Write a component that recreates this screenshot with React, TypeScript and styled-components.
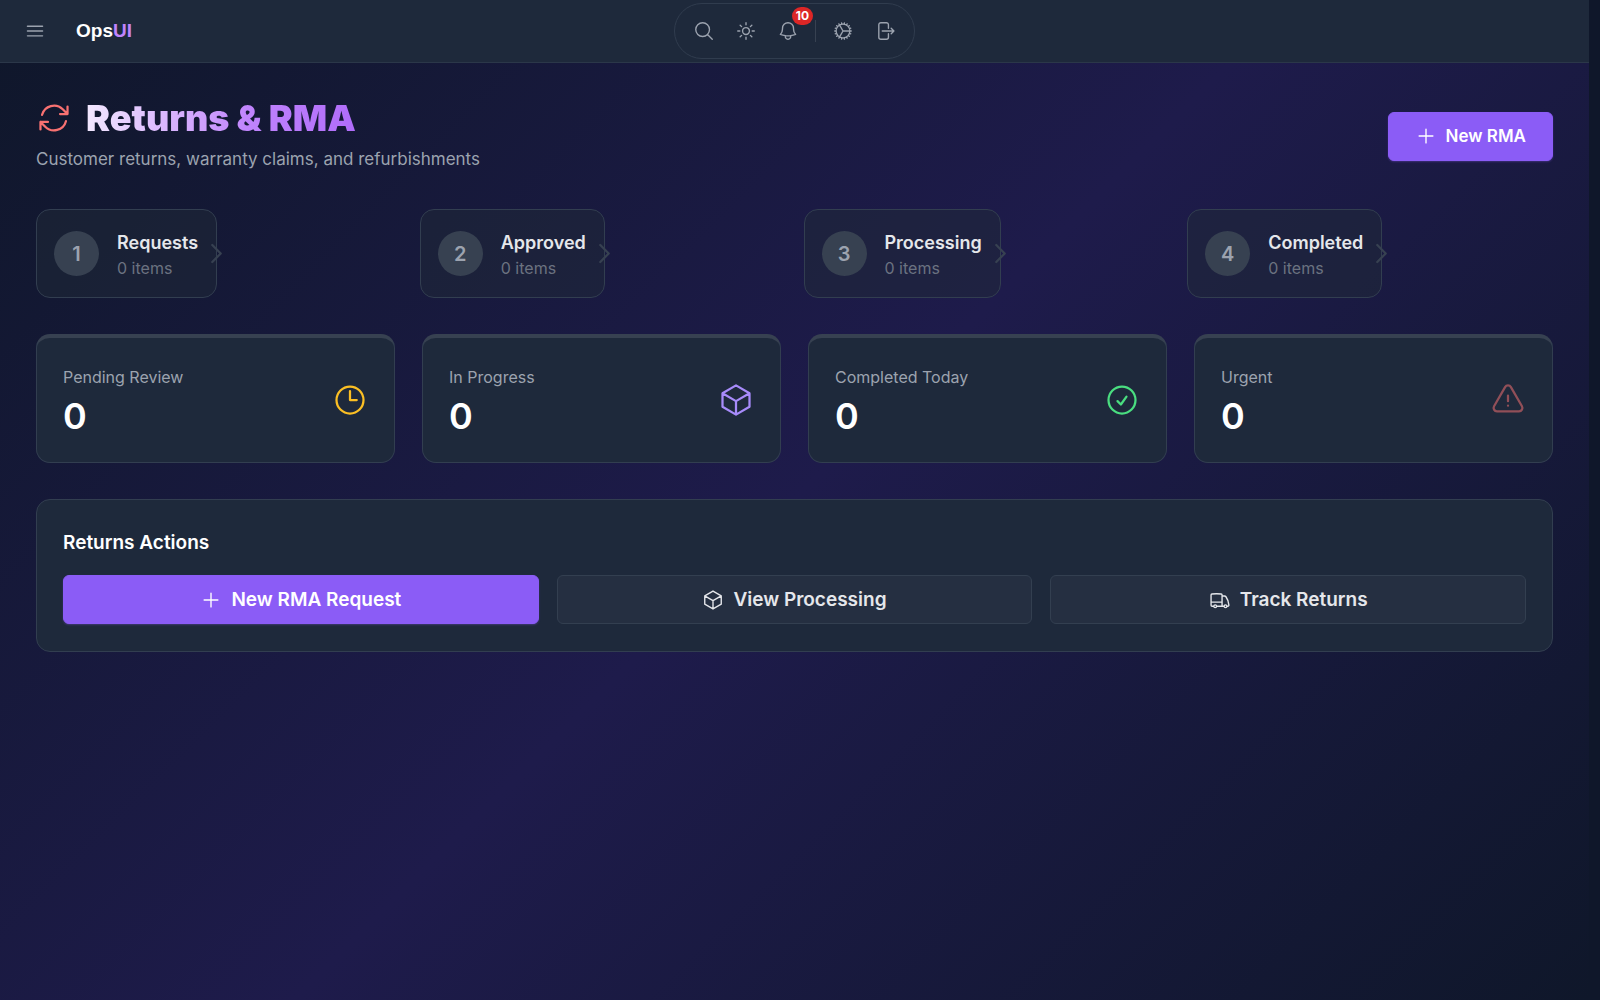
import React from "react";
import styled, { createGlobalStyle } from "styled-components";
import {
  HiOutlineArrowPath,
  HiOutlineArrowRightOnRectangle,
  HiOutlineBars3,
  HiOutlineBell,
  HiOutlineCheckCircle,
  HiOutlineChevronRight,
  HiOutlineClock,
  HiOutlineCog,
  HiOutlineCube,
  HiOutlineExclamationTriangle,
  HiOutlineMagnifyingGlass,
  HiOutlinePlus,
  HiOutlineSun,
  HiOutlineTruck,
} from "react-icons/hi2";

const GlobalStyle = createGlobalStyle`
  *, *::before, *::after { box-sizing: border-box; }
  body {
    margin: 0;
    background: #0f172a;
    font-family: Inter, "Liberation Sans", sans-serif;
    color: #ffffff;
  }
  h1, h2, p, ol { margin: 0; padding: 0; }
  button { font: inherit; cursor: pointer; }
  svg { display: block; flex: none; }
`;

const Gutter = styled.div`
  padding-right: 11px;
`;

const Page = styled.div`
  min-height: 100vh;
  background: linear-gradient(135deg, #0f172a 0%, #1e1b4b 50%, #0f172a 100%);
`;

const Header = styled.header`
  display: grid;
  grid-template-columns: 1fr auto 1fr;
  align-items: center;
  height: 63px;
  padding: 0 16px;
  background: #1e293b;
  border-bottom: 1px solid #2b3749;
`;

const Brand = styled.div`
  display: flex;
  align-items: center;
  gap: 22px;
`;

const IconButton = styled.button`
  position: relative;
  display: grid;
  place-items: center;
  width: 38px;
  height: 38px;
  padding: 0;
  border: 0;
  border-radius: 8px;
  background: transparent;
  color: #9ca3af;
  font-size: 22px;
`;

const Logo = styled.a`
  font-family: "Liberation Sans", sans-serif;
  font-size: 19px;
  line-height: 28px;
  font-weight: 700;
  color: #ffffff;
  text-decoration: none;

  span { color: #c084fc; }
`;

const Toolbar = styled.nav`
  display: flex;
  align-items: center;
  gap: 4px;
  height: 56px;
  padding: 0 10px;
  border: 1px solid #303c4e;
  border-radius: 28px;
`;

const Divider = styled.span`
  width: 1px;
  height: 22px;
  margin: 0 4px;
  background: #374151;
`;

const Badge = styled.span`
  position: absolute;
  top: -5px;
  right: -6px;
  min-width: 21px;
  padding: 0 3px;
  border-radius: 9px;
  background: #dc2626;
  color: #ffffff;
  font-size: 12px;
  line-height: 18px;
  font-weight: 700;
  text-align: center;
`;

const Main = styled.main`
  display: flex;
  flex-direction: column;
  gap: 36px;
  padding: 36px;
`;

const TitleRow = styled.div`
  display: flex;
  align-items: center;
  justify-content: space-between;
`;

const Title = styled.h1`
  display: flex;
  align-items: center;
  gap: 14px;
  font-size: 36px;
  line-height: 38px;
  font-weight: 900;

  svg { color: #f87171; }

  span {
    background: linear-gradient(90deg, #f3e8ff, #c084fc 60%, #b06cfa);
    background-clip: text;
    -webkit-background-clip: text;
    color: transparent;
  }
`;

const Subtitle = styled.p`
  margin-top: 8px;
  font-size: 17px;
  line-height: 28px;
  color: #9ca3af;
`;

const Button = styled.button<{ $primary?: boolean; $large?: boolean }>`
  display: flex;
  align-items: center;
  justify-content: center;
  gap: 9px;
  height: 49px;
  padding: 0 26px;
  border: 1px solid ${(p) => (p.$primary ? "#8b5cf6" : "#333f50")};
  border-radius: 6px;
  background: ${(p) => (p.$primary ? "#8b5cf6" : "#252f41")};
  box-shadow: ${(p) => (p.$primary ? "0 1px 2px rgba(139, 92, 246, 0.3)" : "none")};
  color: ${(p) => (p.$primary ? "#ffffff" : "#e5e7eb")};
  font-size: ${(p) => (p.$large ? 19 : 17)}px;
  font-weight: 600;

  svg { font-size: 22px; }
`;

const Steps = styled.ol`
  display: grid;
  grid-template-columns: repeat(4, 1fr);
  gap: 18px;
  list-style: none;
`;

const Step = styled.li`
  position: relative;
  display: flex;
  align-items: center;
  justify-self: start;
  gap: 18px;
  padding: 17px 18px 17px 17px;
  border: 1px solid #323e50;
  border-radius: 14px;
  background: rgba(31, 41, 55, 0.5);

  > svg {
    position: absolute;
    right: -14px;
    font-size: 27px;
    color: #374151;
  }

  > svg path { stroke-width: 2; }
`;

const StepNumber = styled.span`
  display: grid;
  place-items: center;
  width: 45px;
  height: 45px;
  border-radius: 50%;
  background: #374151;
  color: #9ca3af;
  font-size: 20px;
  font-weight: 600;
`;

const StepText = styled.div`
  padding-top: 2px;
`;

const StepName = styled.p`
  font-size: 18px;
  line-height: 27px;
  font-weight: 600;
  color: #e5e7eb;
`;

const StepCount = styled.p`
  font-size: 16px;
  line-height: 24px;
  color: #6b7280;
`;

const Stats = styled.div`
  display: grid;
  grid-template-columns: repeat(4, 1fr);
  gap: 27px;
`;

const Stat = styled.section<{ $tint: string }>`
  display: flex;
  align-items: center;
  justify-content: space-between;
  padding: 27px 26px;
  border: 1px solid #323e50;
  border-top: 4px solid #374151;
  border-radius: 14px;
  background: #1e293b;

  svg { font-size: 36px; color: ${(p) => p.$tint}; }
`;

const StatLabel = styled.p`
  font-size: 16px;
  line-height: 24px;
  color: #9ca3af;
`;

const StatValue = styled.p`
  margin-top: 9px;
  font-size: 36px;
  line-height: 37px;
  font-weight: 600;
`;

const Panel = styled.section`
  padding: 27px 26px;
  border: 1px solid #323e50;
  border-radius: 14px;
  background: #1e293b;
`;

const PanelTitle = styled.h2`
  font-size: 19px;
  line-height: 32px;
  font-weight: 600;
`;

const Actions = styled.div`
  display: grid;
  grid-template-columns: repeat(3, 1fr);
  gap: 18px;
  margin-top: 16px;
`;

const steps = ["Requests", "Approved", "Processing", "Completed"];

const stats = [
  { label: "Pending Review", tint: "#fbbf24", Icon: HiOutlineClock },
  { label: "In Progress", tint: "#a78bfa", Icon: HiOutlineCube },
  { label: "Completed Today", tint: "#4ade80", Icon: HiOutlineCheckCircle },
  { label: "Urgent", tint: "#914f58", Icon: HiOutlineExclamationTriangle },
];

export default function App() {
  return (
    <Gutter>
      <GlobalStyle />
      <Page>
        <Header>
          <Brand>
            <IconButton aria-label="Open menu"><HiOutlineBars3 /></IconButton>
            <Logo href="#">Ops<span>UI</span></Logo>
          </Brand>
          <Toolbar>
            <IconButton aria-label="Search"><HiOutlineMagnifyingGlass /></IconButton>
            <IconButton aria-label="Theme"><HiOutlineSun /></IconButton>
            <IconButton aria-label="Notifications">
              <HiOutlineBell />
              <Badge>10</Badge>
            </IconButton>
            <Divider />
            <IconButton aria-label="Settings"><HiOutlineCog /></IconButton>
            <IconButton aria-label="Sign out"><HiOutlineArrowRightOnRectangle /></IconButton>
          </Toolbar>
        </Header>

        <Main>
          <TitleRow>
            <div>
              <Title><HiOutlineArrowPath /><span>Returns &amp; RMA</span></Title>
              <Subtitle>Customer returns, warranty claims, and refurbishments</Subtitle>
            </div>
            <Button $primary><HiOutlinePlus />New RMA</Button>
          </TitleRow>

          <Steps>
            {steps.map((name, i) => (
              <Step key={name}>
                <StepNumber>{i + 1}</StepNumber>
                <StepText>
                  <StepName>{name}</StepName>
                  <StepCount>0 items</StepCount>
                </StepText>
                <HiOutlineChevronRight />
              </Step>
            ))}
          </Steps>

          <Stats>
            {stats.map(({ label, tint, Icon }) => (
              <Stat key={label} $tint={tint}>
                <div>
                  <StatLabel>{label}</StatLabel>
                  <StatValue>0</StatValue>
                </div>
                <Icon />
              </Stat>
            ))}
          </Stats>

          <Panel>
            <PanelTitle>Returns Actions</PanelTitle>
            <Actions>
              <Button $primary $large><HiOutlinePlus />New RMA Request</Button>
              <Button $large><HiOutlineCube />View Processing</Button>
              <Button $large><HiOutlineTruck />Track Returns</Button>
            </Actions>
          </Panel>
        </Main>
      </Page>
    </Gutter>
  );
}
